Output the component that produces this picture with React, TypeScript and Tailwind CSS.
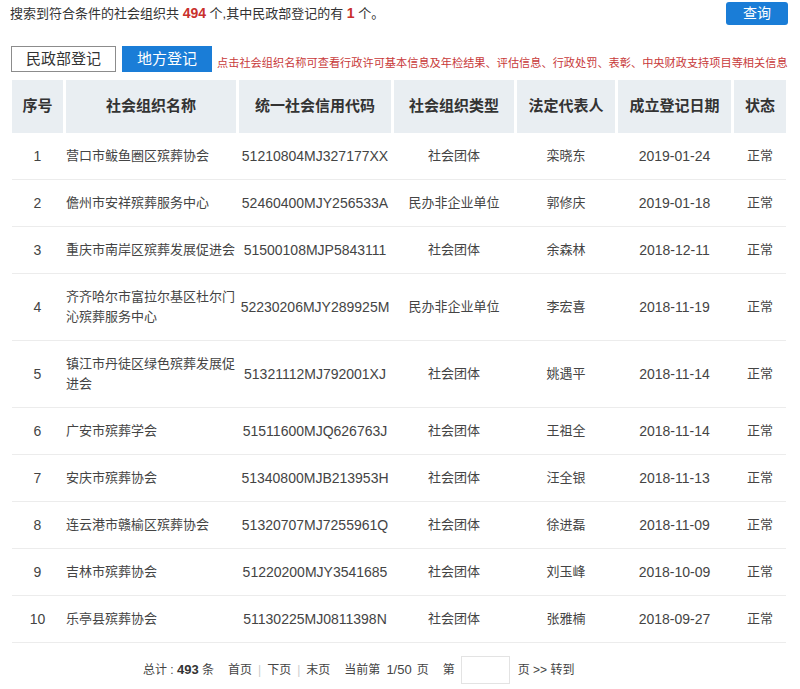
const rows = [
  { no: 1, name: '营口市鲅鱼圈区殡葬协会', code: '51210804MJ327177XX', type: '社会团体', rep: '栾晓东', date: '2019-01-24' },
  { no: 2, name: '儋州市安祥殡葬服务中心', code: '52460400MJY256533A', type: '民办非企业单位', rep: '郭修庆', date: '2019-01-18' },
  { no: 3, name: '重庆市南岸区殡葬发展促进会', code: '51500108MJP5843111', type: '社会团体', rep: '余森林', date: '2018-12-11' },
  { no: 4, name: '齐齐哈尔市富拉尔基区杜尔门沁殡葬服务中心', code: '52230206MJY289925M', type: '民办非企业单位', rep: '李宏喜', date: '2018-11-19' },
  { no: 5, name: '镇江市丹徒区绿色殡葬发展促进会', code: '51321112MJ792001XJ', type: '社会团体', rep: '姚遇平', date: '2018-11-14' },
  { no: 6, name: '广安市殡葬学会', code: '51511600MJQ626763J', type: '社会团体', rep: '王祖全', date: '2018-11-14' },
  { no: 7, name: '安庆市殡葬协会', code: '51340800MJB213953H', type: '社会团体', rep: '汪全银', date: '2018-11-13' },
  { no: 8, name: '连云港市赣榆区殡葬协会', code: '51320707MJ7255961Q', type: '社会团体', rep: '徐进磊', date: '2018-11-09' },
  { no: 9, name: '吉林市殡葬协会', code: '51220200MJY3541685', type: '社会团体', rep: '刘玉峰', date: '2018-10-09' },
  { no: 10, name: '乐亭县殡葬协会', code: '51130225MJ0811398N', type: '社会团体', rep: '张雅楠', date: '2018-09-27' },
];

const headers = ['序号', '社会组织名称', '统一社会信用代码', '社会组织类型', '法定代表人', '成立登记日期', '状态'];

const cols = 'grid grid-cols-[51px_170px_152px_120px_98px_113px_52px] gap-x-[3px]';

export default function App() {
  return (
    <div className="w-[800px] h-[689px] bg-white text-[#333] font-['Liberation_Sans','Noto_Sans_CJK_SC',sans-serif] overflow-hidden">
      {/* 顶部统计 + 查询 */}
      <div className="flex justify-between items-start pl-[10px] pr-[12px]">
        <p className="mt-[5px] text-[13px] leading-[16px]">
          搜索到符合条件的社会组织共 <b className="text-[#c9302c] text-[14px]">494</b> 个,其中民政部登记的有 <b className="text-[#c9302c] text-[14px]">1</b> 个。
        </p>
        <button className="mt-[2px] w-[62px] h-[23px] rounded-[3px] bg-[#1a7dd7] text-white text-[14px]">查询</button>
      </div>

      {/* 标签 */}
      <div className="flex mt-[21px] pl-[11px]">
        <div className="w-[105px] h-[26px] border border-[#8c8c8c] flex items-center justify-center text-[15px] text-[#333]">民政部登记</div>
        <div className="ml-[6px] w-[90px] h-[26px] bg-[#1a7dd7] flex items-center justify-center text-[15px] text-white">地方登记</div>
        <p className="ml-[5px] self-end pb-[2px] text-[11.2px] leading-[14px] text-[#c83a3a] whitespace-nowrap">
          点击社会组织名称可查看行政许可基本信息及年检结果、评估信息、行政处罚、表彰、中央财政支持项目等相关信息
        </p>
      </div>

      {/* 表格 */}
      <div className="mt-[8px] ml-[12px] w-[774px]">
        <div className={cols}>
          {headers.map((h) => (
            <div key={h} className="h-[53px] bg-[#e9eef2] flex items-center justify-center text-[15px] font-bold text-[#333]">
              {h}
            </div>
          ))}
        </div>
        {rows.map((r) => (
          <div key={r.no} className={`${cols} items-center border-b border-[#ececec] text-[13px] leading-[20px] text-[#444]`}>
            <div className="py-[13px] text-center text-[14px]">{r.no}</div>
            <div className="py-[13px]">{r.name}</div>
            <div className="py-[13px] text-center text-[14px]">{r.code}</div>
            <div className="py-[13px] text-center">{r.type}</div>
            <div className="py-[13px] text-center">{r.rep}</div>
            <div className="py-[13px] text-center text-[14px]">{r.date}</div>
            <div className="py-[13px] text-center">正常</div>
          </div>
        ))}
      </div>

      {/* 分页 */}
      <div className="mt-[13px] pl-[143px] flex items-center h-[28px] text-[12px] text-[#444] whitespace-nowrap">
        <span>总计 : <b className="text-[#333] text-[13px]">493</b> 条</span>
        <span className="ml-[14px]">首页</span>
        <span className="mx-[6px] text-[#ccc]">|</span>
        <span>下页</span>
        <span className="mx-[6px] text-[#ccc]">|</span>
        <span>末页</span>
        <span className="ml-[14px]">当前第</span>
        <span className="ml-[6px] text-[13px]">1/50</span>
        <span className="ml-[5px]">页</span>
        <span className="ml-[14px]">第</span>
        <input className="ml-[6px] w-[49px] h-[28px] border border-[#e3e3e3] outline-none" />
        <span className="ml-[8px]">页 &gt;&gt; 转到</span>
      </div>
    </div>
  );
}
